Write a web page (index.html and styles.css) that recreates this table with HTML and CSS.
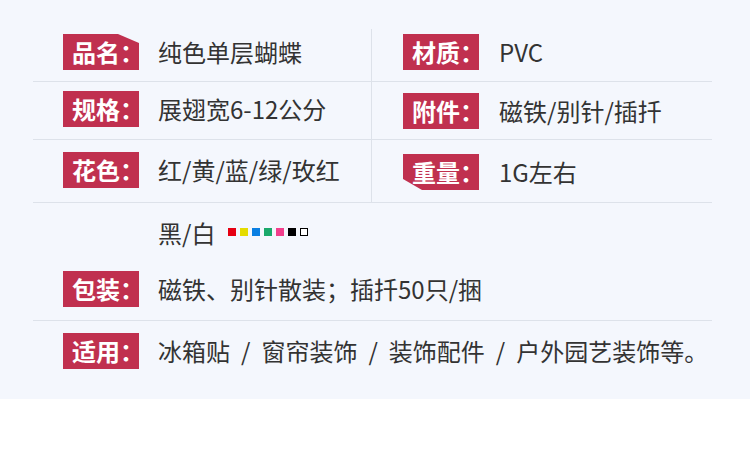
FILE: index.html
```html
<!DOCTYPE html>
<html lang="zh-CN">
<head>
<meta charset="utf-8">
<title>产品参数</title>
<link rel="stylesheet" href="styles.css">
</head>
<body>
<div class="sheet">
  <div class="specs">
    <div class="row r1">
      <div class="cell left"><span class="tag tag-cut-top">品名<span class="colon">：</span></span><span class="val">纯色单层蝴蝶</span></div>
      <div class="cell right"><span class="tag">材质<span class="colon">：</span></span><span class="val">PVC</span></div>
    </div>
    <div class="row r2">
      <div class="cell left"><span class="tag">规格<span class="colon">：</span></span><span class="val">展翅宽6-12公分</span></div>
      <div class="cell right"><span class="tag">附件<span class="colon">：</span></span><span class="val">磁铁/别针/插扦</span></div>
    </div>
    <div class="row r3">
      <div class="cell left"><span class="tag">花色<span class="colon">：</span></span><span class="val">红/黄/蓝/绿/玫红</span></div>
      <div class="cell right"><span class="tag tag-cut-bottom">重量<span class="colon">：</span></span><span class="val">1G左右</span></div>
    </div>
  </div>
  <div class="extra">
    <span class="val">黑/白</span>
    <span class="swatches">
      <i class="sw red"></i><i class="sw yellow"></i><i class="sw blue"></i><i class="sw green"></i><i class="sw pink"></i><i class="sw black"></i><i class="sw white"></i>
    </span>
  </div>
  <div class="line pack">
    <span class="tag">包装<span class="colon">：</span></span><span class="val">磁铁、别针散装；插扦50只/捆</span>
  </div>
  <div class="line use">
    <span class="tag">适用<span class="colon">：</span></span><span class="val">冰箱贴<span class="sep">/</span>窗帘装饰<span class="sep">/</span>装饰配件<span class="sep">/</span>户外园艺装饰等。</span>
  </div>
</div>
</body>
</html>
```

FILE: styles.css
```css
* { box-sizing: border-box; }
html, body { margin: 0; padding: 0; background: #ffffff; }
body {
  font-family: "Noto Sans CJK SC", "Noto Sans", sans-serif;
  color: #333333;
}
.sheet {
  width: 750px;
  height: 399px;
  background: #f4f7fd;
  padding-top: 29px;
}
.specs {
  margin-left: 33px;
  width: 679px;
}
.row {
  display: grid;
  grid-template-columns: 339px 340px;
  border-bottom: 1px solid #dde2ea;
}
.cell {
  display: flex;
  align-items: flex-start;
}
.cell.left {
  padding-left: 30px;
  border-right: 1px solid #dde2ea;
}
.cell.right {
  padding-left: 31px;
}
.r1 { height: 53px; }
.r1 .cell { padding-top: 5px; }
.r2 { height: 58px; }
.r2 .left { padding-top: 9px; }
.r2 .right { padding-top: 11px; }
.r3 { height: 63px; }
.r3 .left { padding-top: 12px; }
.r3 .right { padding-top: 14px; }

.tag {
  flex: none;
  display: inline-block;
  width: 76px;
  height: 36px;
  padding-left: 9px;
  background: #c0304f;
  color: #ffffff;
  font-weight: 700;
  font-size: 24px;
  line-height: 36px;
  white-space: nowrap;
}
.colon {
  letter-spacing: -8px;
}
.tag-cut-top {
  clip-path: polygon(0 0, 55px 0, 76px 9px, 76px 36px, 0 36px);
}
.tag-cut-bottom {
  clip-path: polygon(0 0, 76px 0, 76px 36px, 19px 36px, 0 25px);
}
.val {
  font-size: 24px;
  line-height: 36px;
  white-space: nowrap;
}
.cell .tag + .val,
.line .tag + .val { margin-left: 19px; }
.cell.right .tag + .val { margin-left: 20px; }

.extra {
  display: flex;
  align-items: center;
  margin-top: 12px;
  padding-left: 158px;
  height: 36px;
}
.swatches {
  display: flex;
  gap: 4px;
  margin-left: 13px;
  margin-top: -2px;
}
.sw {
  display: block;
  width: 8px;
  height: 8px;
}
.sw.red { background: #e60012; }
.sw.yellow { background: #e5dc00; }
.sw.blue { background: #0a7fe2; }
.sw.green { background: #1aa96b; }
.sw.pink { background: #f23f8c; }
.sw.black { background: #000000; }
.sw.white { background: #ffffff; border: 1.5px solid #000000; }

.line {
  display: flex;
  align-items: flex-start;
  margin-left: 33px;
  width: 679px;
  padding-left: 30px;
}
.pack {
  padding-top: 20px;
  height: 70px;
  border-bottom: 1px solid #dde2ea;
}
.use {
  padding-top: 12px;
}
.sep {
  display: inline-block;
  margin: 0 11px;
}
```
